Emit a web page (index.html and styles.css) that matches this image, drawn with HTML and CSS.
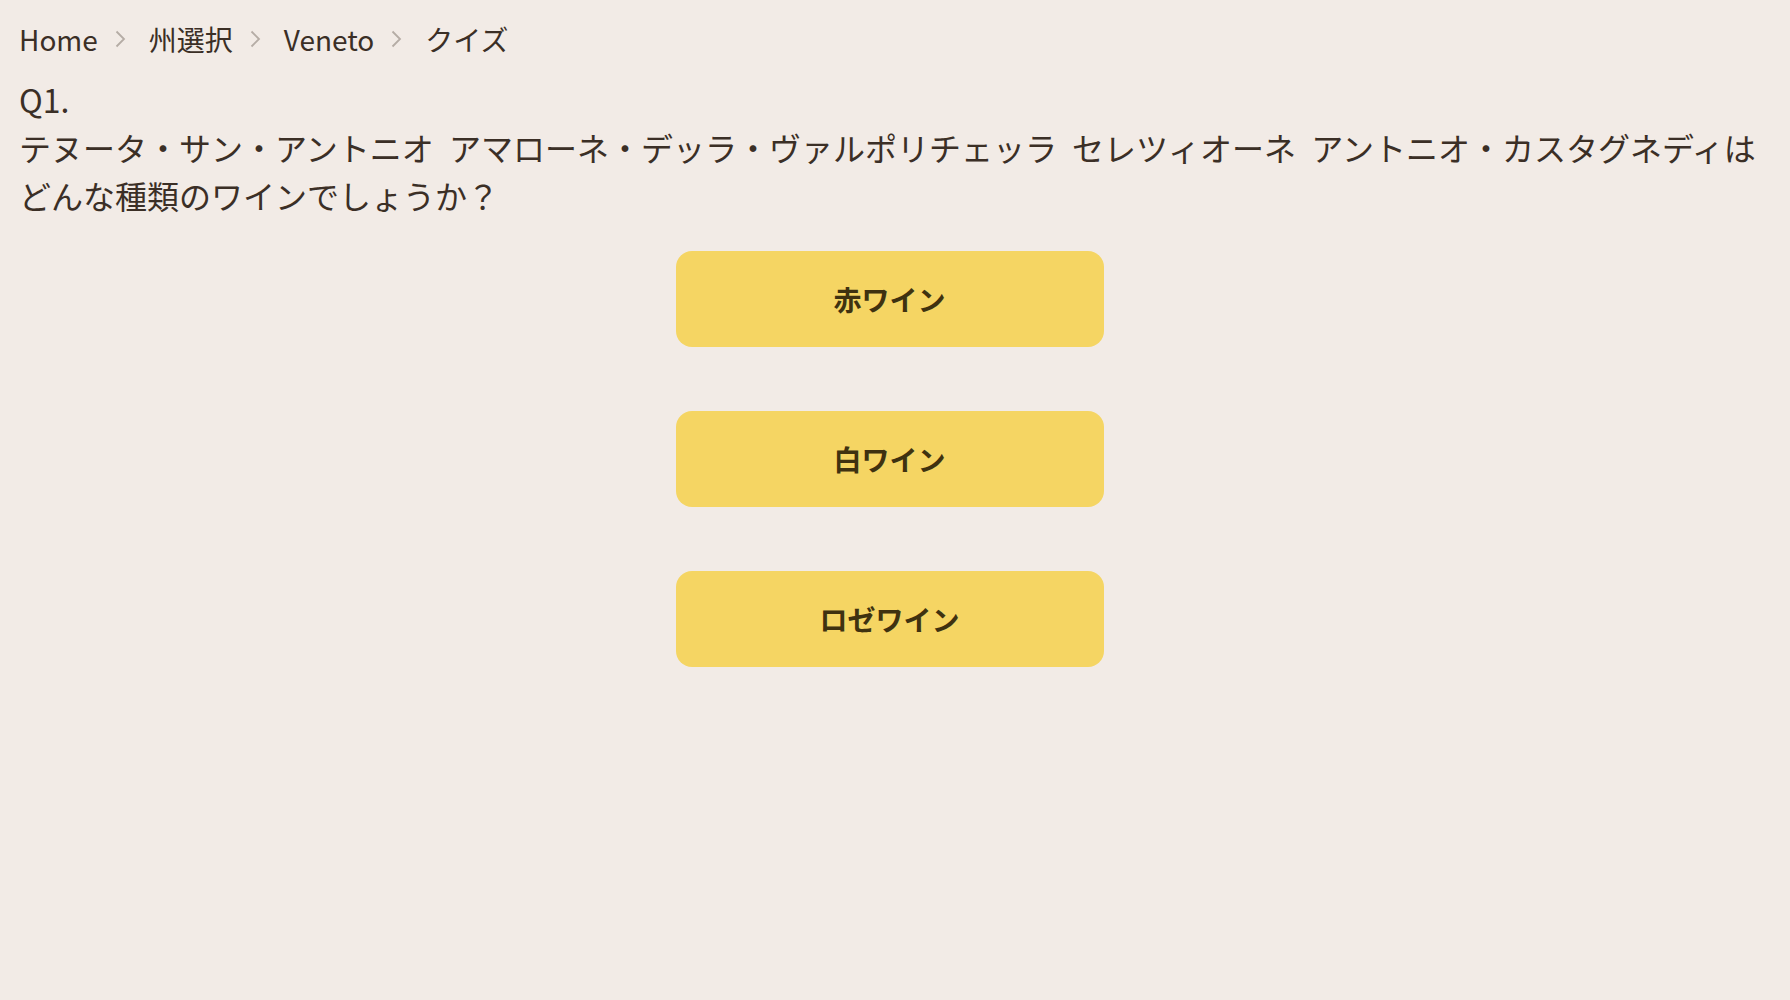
FILE: index.html
```html
<!DOCTYPE html>
<html lang="ja">
<head>
<meta charset="utf-8">
<title>クイズ</title>
<link rel="stylesheet" href="styles.css">
</head>
<body>
<div class="page">
  <nav class="breadcrumb">
    <a class="crumb" href="#">Home</a>
    <span class="sep"><svg width="12" height="18" viewBox="0 0 12 18"><path d="M2.5 1.5 L10 9 L2.5 16.5" fill="none" stroke="currentColor" stroke-width="1.8"/></svg></span>
    <a class="crumb" href="#">州選択</a>
    <span class="sep"><svg width="12" height="18" viewBox="0 0 12 18"><path d="M2.5 1.5 L10 9 L2.5 16.5" fill="none" stroke="currentColor" stroke-width="1.8"/></svg></span>
    <a class="crumb" href="#">Veneto</a>
    <span class="sep"><svg width="12" height="18" viewBox="0 0 12 18"><path d="M2.5 1.5 L10 9 L2.5 16.5" fill="none" stroke="currentColor" stroke-width="1.8"/></svg></span>
    <span class="crumb">クイズ</span>
  </nav>
  <section class="question">
    <div class="qnum">Q1.</div>
    <p class="qtext">テヌータ・サン・アントニオ アマローネ・デッラ・ヴァルポリチェッラ セレツィオーネ アントニオ・カスタグネディはどんな種類のワインでしょうか？</p>
  </section>
  <div class="answers">
    <button class="answer">赤ワイン</button>
    <button class="answer">白ワイン</button>
    <button class="answer">ロゼワイン</button>
  </div>
</div>
</body>
</html>
```

FILE: styles.css
```css
html, body {
  margin: 0;
  padding: 0;
  background: #f2ebe6;
}
body {
  font-family: "Noto Sans CJK JP", "Noto Sans", sans-serif;
  color: #3b2f26;
}
.page {
  padding: 12px 20px 0 19px;
}
.breadcrumb {
  display: flex;
  align-items: center;
  height: 54px;
  font-size: 28px;
}
.crumb {
  color: #3b2f26;
  text-decoration: none;
}
.sep {
  display: flex;
  align-items: center;
  color: #b5aca5;
  margin: 0 23px 0 16px;
}
.question {
  margin-top: 9px;
}
.qnum {
  font-size: 32px;
  line-height: 48px;
}
.qtext {
  margin: 0;
  font-size: 32px;
  line-height: 48px;
  word-spacing: 8px;
}
.answers {
  display: flex;
  flex-direction: column;
  align-items: center;
  gap: 64px;
  margin-top: 32px;
  padding-right: 10px;
}
.answer {
  width: 428px;
  height: 96px;
  border: none;
  border-radius: 16px;
  background: #f5d563;
  color: #3f3210;
  font-family: "Noto Sans CJK JP", sans-serif;
  font-weight: 700;
  font-size: 28px;
  cursor: pointer;
}
```
